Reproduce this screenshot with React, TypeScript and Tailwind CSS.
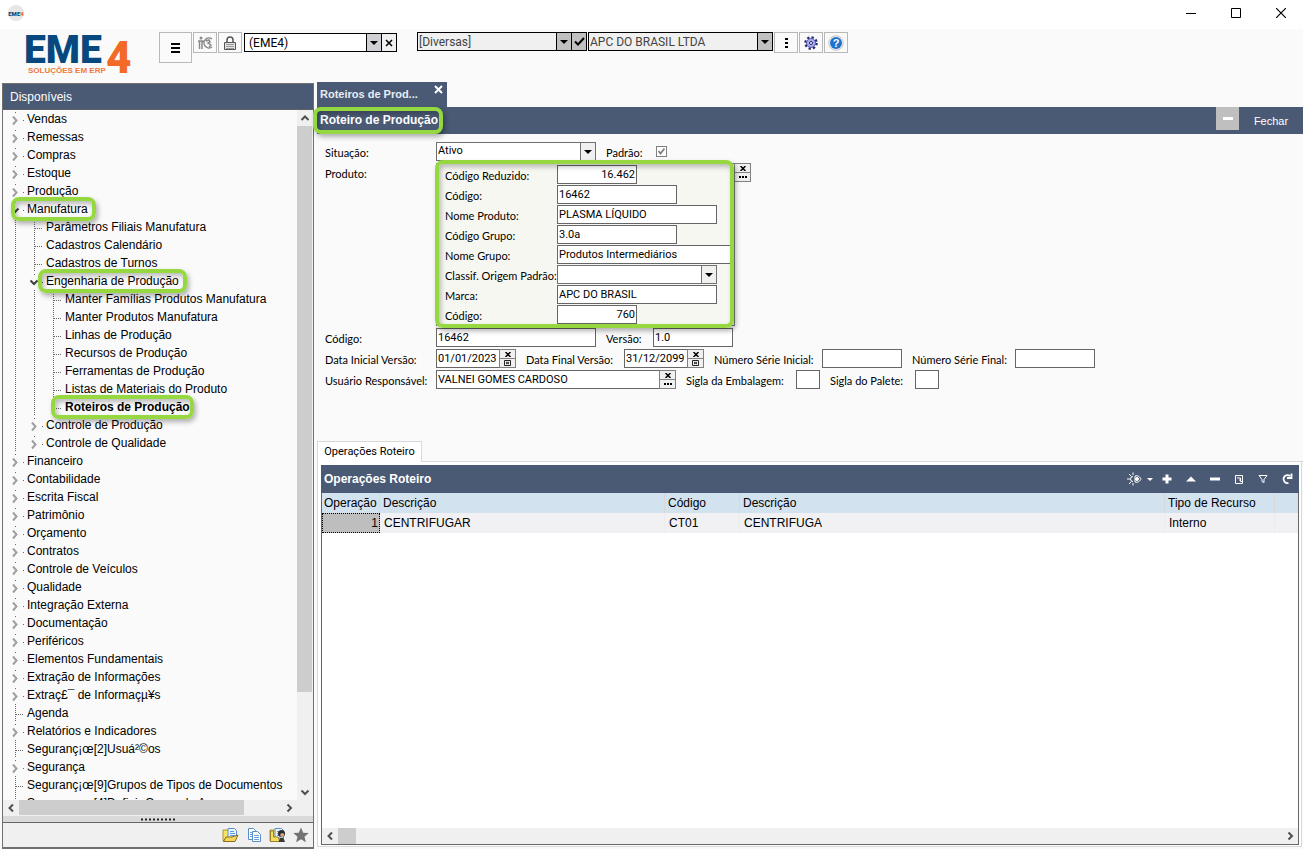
import React from "react";

type Node = { label: string; kids?: Node[]; leaf?: boolean; open?: boolean; bold?: boolean; mark?: string };

const leaf = (label: string): Node => ({ label, leaf: true });
const closed = (label: string): Node => ({ label });

const tree: Node[] = [
  closed("Vendas"),
  closed("Remessas"),
  closed("Compras"),
  closed("Estoque"),
  closed("Produção"),
  {
    label: "Manufatura",
    open: true,
    mark: "-left-4 -right-2",
    kids: [
      leaf("Parâmetros Filiais Manufatura"),
      leaf("Cadastros Calendário"),
      leaf("Cadastros de Turnos"),
      {
        label: "Engenharia de Produção",
        open: true,
        mark: "-left-2 -right-2",
        kids: [
          leaf("Manter Famílias Produtos Manufatura"),
          leaf("Manter Produtos Manufatura"),
          leaf("Linhas de Produção"),
          leaf("Recursos de Produção"),
          leaf("Ferramentas de Produção"),
          leaf("Listas de Materiais do Produto"),
          { label: "Roteiros de Produção", leaf: true, bold: true, mark: "-left-3.5 -right-1" },
        ],
      },
      closed("Controle de Produção"),
      closed("Controle de Qualidade"),
    ],
  },
  closed("Financeiro"),
  closed("Contabilidade"),
  closed("Escrita Fiscal"),
  closed("Patrimônio"),
  closed("Orçamento"),
  closed("Contratos"),
  closed("Controle de Veículos"),
  closed("Qualidade"),
  closed("Integração Externa"),
  closed("Documentação"),
  closed("Periféricos"),
  closed("Elementos Fundamentais"),
  closed("Extração de Informações"),
  closed("Extraç£¯ de Informaçµ¥s"),
  leaf("Agenda"),
  closed("Relatórios e Indicadores"),
  leaf("Seguranç¡œ[2]Usuá²©os"),
  closed("Segurança"),
  leaf("Seguranç¡œ[9]Grupos de Tipos de Documentos"),
  leaf("Seguranç¡œ[4]Definir Grupo de Acesso"),
];

const GREEN = "pointer-events-none absolute z-10 rounded-lg border-4 border-[#95d840] shadow-[2px_3px_5px_rgba(0,0,0,0.3),inset_2px_3px_5px_rgba(0,0,0,0.25)]";

function Guide() {
  return (
    <svg className="h-[18px] w-[19px] shrink-0" viewBox="0 0 19 18" shapeRendering="crispEdges">
      <path d="M7.5 0V18" stroke="#666" strokeDasharray="1 1" />
    </svg>
  );
}

function Knob({ node, last }: { node: Node; last: boolean }) {
  return (
    <svg className="h-[18px] w-[19px] shrink-0" viewBox="0 0 19 18">
      {node.leaf ? (
        <path d={last ? "M7.5 0V11M8 10.5H16" : "M7.5 0V18M8 10.5H16"} stroke="#666" strokeDasharray="1 1" fill="none" shapeRendering="crispEdges" />
      ) : (
        <>
          {node.open ? (
            <path d="M3.5 8.5L7 12L10.5 8.5" stroke="#404040" strokeWidth="2" fill="none" />
          ) : (
            <path d="M5 6.5L8.5 10.5L5 14.5" stroke="#a0a0a0" strokeWidth="2" fill="none" />
          )}
          <path d="M15 10.5H16M7 2.5H8" stroke="#666" shapeRendering="crispEdges" />
        </>
      )}
    </svg>
  );
}

function Branch({ nodes, depth }: { nodes: Node[]; depth: number }) {
  return (
    <ul>
      {nodes.map((n, i) => (
        <li key={n.label}>
          <div className="flex h-[18px] items-center whitespace-nowrap">
            {Array.from({ length: depth }, (_, g) => (
              <Guide key={g} />
            ))}
            <Knob node={n} last={depth > 0 && i === nodes.length - 1} />
            <a href="#" className={n.bold ? "relative font-bold leading-[18px]" : "relative leading-[18px]"}>
              {n.label}
              {n.mark && <span className={`${GREEN} -inset-y-[3px] ${n.mark}`} />}
            </a>
          </div>
          {n.kids && <Branch nodes={n.kids} depth={depth + 1} />}
        </li>
      ))}
    </ul>
  );
}

function Arrow({ dir }: { dir: "up" | "down" | "left" | "right" }) {
  const d = { up: "M4.5 10L8 6.5L11.5 10", down: "M4.5 6.5L8 10L11.5 6.5", left: "M10 4.5L6.5 8L10 11.5", right: "M6.5 4.5L10 8L6.5 11.5" }[dir];
  return (
    <button type="button" aria-label={dir} className="size-4 shrink-0">
      <svg viewBox="0 0 16 16" className="size-4">
        <path d={d} fill="none" stroke="#505050" strokeWidth="2" />
      </svg>
    </button>
  );
}

function Caret() {
  return (
    <svg viewBox="0 0 8 4" className="h-1 w-2">
      <path d="M0 0H8L4 4Z" fill="#000" />
    </svg>
  );
}

function Combo({ value, label, id, className, cell, textClass }: { value: string; label?: string; id?: string; className: string; cell: string; textClass: string }) {
  return (
    <div className={`relative flex h-[19px] border ${className}`}>
      <select id={id} aria-label={label} className={`w-full appearance-none bg-transparent px-px font-['Roboto',sans-serif] outline-none ${textClass}`}>
        <option>{value}</option>
      </select>
      <span className={`pointer-events-none absolute inset-y-0 right-0 flex w-[15px] items-center justify-center border-l ${cell}`}>
        <Caret />
      </span>
    </div>
  );
}

const ICON_BTN = "flex h-[21px] w-6 items-center justify-center border border-[#b8b8b8] bg-[#fafafa]";
const FIELD_TEXT = "text-[11px] text-black";
const LABEL = "shrink-0 whitespace-nowrap pt-0.5 leading-[17px]";
const INPUT = "h-[19px] border border-[#666] bg-white px-px font-['Roboto',sans-serif] text-[11px] text-black outline-none";

function Pair({ kind }: { kind: "dots" | "cal" }) {
  return (
    <span className="-ml-px flex h-[19px] w-[17px] shrink-0 flex-col border border-[#808080] bg-[#f0f0f0]">
      <button type="button" aria-label="Limpar" className="flex h-[9px] items-center justify-center border-b border-[#808080]">
        <svg viewBox="0 0 6 5" className="h-[5px] w-1.5">
          <path d="M0.5 0L5.5 5M5.5 0L0.5 5" stroke="#000" strokeWidth="1.5" />
        </svg>
      </button>
      <button type="button" aria-label="Escolher" className="flex h-2 items-center justify-center">
        {kind === "dots" ? (
          <svg viewBox="0 0 8 2" className="h-0.5 w-2">
            <path d="M0 1H2M3 1H5M6 1H8" stroke="#000" strokeWidth="2" />
          </svg>
        ) : (
          <svg viewBox="0 0 7 6" className="h-1.5 w-[7px]">
            <path d="M0.5 0.5H6.5V5.5H0.5ZM2 2L5 4M5 2L2 4" stroke="#222" fill="none" />
          </svg>
        )}
      </button>
    </span>
  );
}

function Field({ id, label, value, labelWidth, width, right }: { id: string; label: string; value: string; labelWidth: string; width: string; right?: boolean }) {
  return (
    <>
      <label htmlFor={id} className={`${LABEL} ${labelWidth}`}>{label}</label>
      <input id={id} defaultValue={value} className={`${INPUT} ${width} ${right ? "text-right" : ""}`} />
    </>
  );
}

function Logo() {
  return (
    <svg viewBox="0 0 112 48" className="h-12 w-28 overflow-visible" role="img" aria-label="EME4 Soluções em ERP">
      <text x="0" y="31" fontFamily="Roboto, sans-serif" fontWeight="900" fontSize="39" fill="#07497f">EME</text>
      <text x="82" y="41" fontFamily="Roboto, sans-serif" fontWeight="900" fontSize="44" fill="#f26a25">4</text>
      <text x="4" y="41" fontFamily="Liberation Sans, sans-serif" fontWeight="700" fontSize="8" fill="#ee7a3d">SOLUÇÕES EM ERP</text>
    </svg>
  );
}

function Folder({ person }: { person?: boolean }) {
  return (
    <svg viewBox="0 0 17 16" className="h-4 w-[17px]">
      <path d="M1 3H6L7 5V14H1Z" fill="#f7e36a" stroke="#b0922a" />
      <path d="M6 1.5H12.5L14.5 3.5V11H6Z" fill="#e9f3ff" stroke="#5b8fc9" />
      <path d="M8 4.5H12M8 6.5H13M8 8.5H13" stroke="#5b9be0" />
      {person ? (
        <>
          <path d="M1.5 14.5V4H4.500V10H9L11 14.5Z" fill="#f3dc5e" stroke="#8a6b17" strokeWidth="0.8" />
          <circle cx="12.500" cy="6.500" r="3.500" fill="#2b2b2b" />
          <circle cx="13.2" cy="8" r="2" fill="#d9a27c" />
          <path d="M9.500 15L11 11H14.500L16 15Z" fill="#3a3a3a" />
        </>
      ) : (
        <path d="M1.5 14.5L4 10H10L16 8L13 14.5Z" fill="#f5d75c" stroke="#8a6b17" />
      )}
    </svg>
  );
}

function Sidebar() {
  return (
    <aside className="ml-0.5 mt-px flex w-[312px] shrink-0 flex-col border-b-2 border-l border-r border-t border-[#707070] bg-[#fafafa] text-[12px] text-black">
      <h2 className="h-[26px] shrink-0 border-b border-[#606060] bg-[#4a5a74] pl-[7px] leading-[27px] text-white">Disponíveis</h2>
      <div className="flex min-h-0 flex-1">
        <nav className="min-w-0 flex-1 overflow-hidden pl-[5px]">
          <Branch nodes={tree} depth={0} />
        </nav>
        <div className="flex w-4 flex-col bg-[#f0f0f0]">
          <Arrow dir="up" />
          <div className="flex-1">
            <div className="h-[86%] w-[15px] bg-[#cdcdcd]" />
          </div>
          <Arrow dir="down" />
        </div>
      </div>
      <div className="flex h-4 shrink-0 bg-[#f0f0f0] pr-4">
        <Arrow dir="left" />
        <div className="flex-1">
          <div className="h-[15px] w-[86%] bg-[#cdcdcd]" />
        </div>
        <Arrow dir="right" />
      </div>
      <div className="flex h-[7px] shrink-0 items-center justify-center border-b border-[#666] bg-[#dadada]">
        <svg viewBox="0 0 35 3" className="h-[3px] w-[35px]">
          <path d="M0 1.5H35" stroke="#222" strokeWidth="2" strokeDasharray="2 2" />
        </svg>
      </div>
      <div className="flex h-6 shrink-0 items-center justify-end gap-[7px] bg-[#f0f0f0] pr-1">
        <button type="button" aria-label="Abrir"><Folder /></button>
        <button type="button" aria-label="Copiar">
          <svg viewBox="0 0 16 16" className="size-4">
            <path d="M2.5 1.5H7.5L9.5 3.5V12.5H2.5Z" fill="#fff" stroke="#5b8fc9" />
            <path d="M6.5 4.5H11.5L14.5 7.5V14.5H6.5Z" fill="#fff" stroke="#5b8fc9" />
            <path d="M8 8.5H13M8 10.5H13M8 12.5H13M4 5.5H6M4 7.5H6M4 9.5H6" stroke="#6aa3e0" />
          </svg>
        </button>
        <button type="button" aria-label="Usuário"><Folder person /></button>
        <button type="button" aria-label="Favoritos">
          <svg viewBox="0 0 16 16" className="size-4">
            <path d="M8 0.5L10.2 5.7L15.8 6.1L11.5 9.8L12.9 15.3L8 12.3L3.1 15.3L4.5 9.8L0.2 6.1L5.8 5.7Z" fill="#70736f" />
          </svg>
        </button>
      </div>
    </aside>
  );
}

function ProductForm() {
  return (
    <form className="flex shrink-0 flex-col gap-0.5 pb-[52px] pl-2 pt-2 font-['Lato',sans-serif] text-[11px]">
      <div className="flex">
        <label htmlFor="sit" className={`${LABEL} w-[111px]`}>Situação:</label>
        <Combo id="sit" value="Ativo" className="w-40 border-[#707070] bg-white" cell="border-[#707070] bg-[#f0f0f0]" textClass={FIELD_TEXT} />
        <label htmlFor="padrao" className={`${LABEL} ml-2.5 w-[50px]`}>Padrão:</label>
        <span className="relative flex items-center">
          <input id="padrao" type="checkbox" defaultChecked className="size-[11px] appearance-none border border-[#808080] bg-white" />
          <svg viewBox="0 0 11 11" className="pointer-events-none absolute size-[11px]">
            <path d="M2.5 5L4.5 7.5L8.5 2.5" fill="none" stroke="#808080" strokeWidth="1.8" />
          </svg>
        </span>
      </div>
      <div className="flex">
        <span className={`${LABEL} w-[111px]`}>Produto:</span>
        <fieldset className="relative flex h-[163px] w-[299px] flex-col gap-px border border-[#808080] bg-[#f7f7f2] pl-2 pt-px">
          <div className="flex"><Field id="cr" label="Código Reduzido:" value="16.462" labelWidth="w-28" width="w-20" right /></div>
          <div className="flex"><Field id="c1" label="Código:" value="16462" labelWidth="w-28" width="w-[120px]" /></div>
          <div className="flex"><Field id="np" label="Nome Produto:" value="PLASMA LÍQUIDO" labelWidth="w-28" width="w-40" /></div>
          <div className="flex"><Field id="cg" label="Código Grupo:" value="3.0a" labelWidth="w-28" width="w-[120px]" /></div>
          <div className="flex"><Field id="ng" label="Nome Grupo:" value="Produtos Intermediários" labelWidth="w-28" width="w-44" /></div>
          <div className="flex">
            <label htmlFor="co" className={`${LABEL} w-28`}>Classif. Origem Padrão:</label>
            <Combo id="co" value="" className="w-40 border-[#707070] bg-white" cell="border-[#707070] bg-[#f0f0f0]" textClass={FIELD_TEXT} />
          </div>
          <div className="flex"><Field id="ma" label="Marca:" value="APC DO BRASIL" labelWidth="w-28" width="w-40" /></div>
          <div className="flex"><Field id="c2" label="Código:" value="760" labelWidth="w-28" width="w-20" right /></div>
          <span className={`${GREEN} -bottom-[3px] -left-0.5 -top-1 right-0`} />
        </fieldset>
        <Pair kind="dots" />
      </div>
      <div className="flex">
        <Field id="cod" label="Código:" value="16462" labelWidth="w-[111px]" width="w-40" />
        <Field id="ver" label="Versão:" value="1.0" labelWidth="ml-2.5 w-[47px]" width="w-20" />
      </div>
      <div className="flex">
        <Field id="di" label="Data Inicial Versão:" value="01/01/2023" labelWidth="w-[111px]" width="w-16" />
        <Pair kind="cal" />
        <Field id="df" label="Data Final Versão:" value="31/12/2099" labelWidth="ml-2.5 w-[98px]" width="w-16" />
        <Pair kind="cal" />
        <Field id="si" label="Número Série Inicial:" value="" labelWidth="ml-2.5 w-[108px]" width="w-20" />
        <Field id="sf" label="Número Série Final:" value="" labelWidth="ml-2.5 w-[103px]" width="w-20" />
      </div>
      <div className="flex">
        <Field id="ur" label="Usuário Responsável:" value="VALNEI GOMES CARDOSO" labelWidth="w-[111px]" width="w-56" />
        <Pair kind="dots" />
        <Field id="se" label="Sigla da Embalagem:" value="" labelWidth="ml-2.5 w-[110px]" width="w-6" />
        <Field id="sp" label="Sigla do Palete:" value="" labelWidth="ml-2.5 w-[85px]" width="w-6" />
      </div>
    </form>
  );
}

const tools: [string, React.ReactNode][] = [
  ["Incluir", <path d="M8 3.5V12.5M3.5 8H12.5" strokeWidth="3" />],
  ["Subir", <path d="M3 10.5L8 5.5L13 10.5Z" fill="#fff" stroke="none" />],
  ["Remover", <path d="M3 8H13" strokeWidth="3" />],
  ["Expandir", <path d="M4.5 4.5H11.5V12.5H4.5ZM6 7H9.500V10.500H11.500M8 9H9.500" />],
  ["Filtrar", <path d="M4 4.5H12L9 8.5V11.5L7 10.5V8.5Z" />],
  ["Atualizar", <path d="M11 5A4 4 0 1 0 9.500 12M12.500 2.500V7H8" strokeWidth="1.800" />],
];

function Operations() {
  const th = "border-r border-[#d8d8d8] px-[3px] text-left font-normal whitespace-nowrap";
  const td = "border-r border-[#ececee] px-1 whitespace-nowrap";
  return (
    <section className="flex min-h-0 flex-1 flex-col">
      <div className="flex shrink-0">
        <button type="button" className="h-[21px] w-[105px] border border-b-0 border-[#d8d8d8] bg-white font-['Roboto',sans-serif] text-[11px] leading-[18px]">Operações Roteiro</button>
        <span className="flex-1 border-b border-[#d8d8d8]" />
      </div>
      <div className="mb-0.5 mr-px flex min-h-0 flex-1 flex-col border border-t-0 border-[#d8d8d8] bg-white px-[3px] pb-px pt-[3px] text-[12px]">
        <div className="-mr-px flex h-7 shrink-0 items-center bg-[#4a5a74] pl-[3px] text-white">
          <h2 className="flex-1 font-bold">Operações Roteiro</h2>
          <button type="button" aria-label="Opções" className="flex w-7 items-center gap-1">
            <svg viewBox="0 0 16 14" className="h-3.5 w-4" fill="none" stroke="#fff">
              <path d="M0 7H3M2 2L4.5 4.5M2 12L4.5 9.500M6 0.500V3M6 11V13.500" />
              <path d="M6 4.500A2.500 2.500 0 0 0 6 9.500" />
              <path d="M8 4C11 3 13 5 14 7C13 9 11 11 8 10Z" />
              <circle cx="10" cy="7" r="1.500" fill="#fff" />
            </svg>
            <svg viewBox="0 0 6 3" className="h-[3px] w-1.5"><path d="M0 0H6L3 3Z" fill="#fff" /></svg>
          </button>
          {tools.map(([name, icon]) => (
            <button key={name} type="button" aria-label={name} className="flex w-6 justify-center">
              <svg viewBox="0 0 16 16" className="size-4" fill="none" stroke="#fff">{icon}</svg>
            </button>
          ))}
        </div>
        <div className="-mr-px flex min-h-0 flex-1 flex-col border border-t-0 border-[#666]">
          <div className="min-h-0 flex-1 overflow-hidden">
            <table className="w-full table-fixed border-separate border-spacing-0">
              <colgroup>
                <col className="w-[58px]" />
                <col className="w-[285px]" />
                <col className="w-[75px]" />
                <col className="w-[425px]" />
                <col className="w-[110px]" />
                <col />
              </colgroup>
              <thead>
                <tr className="h-5 bg-[#d3e2ef]">
                  <th className="border-r border-[#d8d8d8] pl-0.5 text-left font-normal">Operação</th>
                  <th className={th}>Descrição</th>
                  <th className={th}>Código</th>
                  <th className={th}>Descrição</th>
                  <th className={th}>Tipo de Recurso</th>
                  <th aria-label="Vazio" />
                </tr>
              </thead>
              <tbody>
                <tr className="h-5 bg-[#f1f1f3]">
                  <td className="border border-dotted border-black bg-[#bebebe] px-px text-right">1</td>
                  <td className={td}>CENTRIFUGAR</td>
                  <td className={td}>CT01</td>
                  <td className={td}>CENTRIFUGA</td>
                  <td className={td}>Interno</td>
                  <td />
                </tr>
              </tbody>
            </table>
          </div>
          <div className="flex h-4 shrink-0 bg-[#f0f0f0]">
            <Arrow dir="left" />
            <div className="flex-1"><div className="h-full w-[18px] bg-[#cdcdcd]" /></div>
            <Arrow dir="right" />
          </div>
        </div>
      </div>
    </section>
  );
}

export default function App() {
  const winBtn = "flex w-[45px] items-center justify-center";
  return (
    <div className="flex h-screen min-h-[600px] flex-col overflow-hidden bg-[#fafafa] font-['Liberation_Sans',sans-serif] text-black">
      <div className="flex h-[29px] shrink-0 bg-white pl-2">
        <span className="mt-[5px] flex size-4 items-center justify-center rounded-full bg-[#e6e6e6] font-['Roboto',sans-serif] text-[6px] font-black text-[#07497f]">
          EME<span className="text-[#f26a25]">4</span>
        </span>
        <div className="ml-auto flex h-[26px]">
          <button type="button" aria-label="Minimizar" className={winBtn}><svg viewBox="0 0 10 10" className="size-2.5"><path d="M0 5.500H10" stroke="#000" /></svg></button>
          <button type="button" aria-label="Maximizar" className={winBtn}><svg viewBox="0 0 10 10" className="size-2.5"><path d="M0.500 0.500H9.500V9.500H0.500Z" fill="none" stroke="#000" /></svg></button>
          <button type="button" aria-label="Fechar janela" className={winBtn}><svg viewBox="0 0 10 10" className="size-2.5"><path d="M0 0L10 10M10 0L0 10" stroke="#000" strokeWidth="1.200" /></svg></button>
        </div>
      </div>

      <header className="flex h-[53px] shrink-0 items-start pt-[3px] text-[12px]">
        <div className="ml-6 w-[135px]"><Logo /></div>
        <button type="button" aria-label="Menu" className="flex h-[31px] w-[33px] items-center justify-center border border-[#b8b8b8] bg-[#fafafa]">
          <svg viewBox="0 0 9 10" className="h-2.5 w-[9px]"><path d="M0 1H9M0 5H9M0 9H9" stroke="#000" strokeWidth="2" /></svg>
        </button>
        <button type="button" aria-label="Informações" className={`${ICON_BTN} ml-px`}>
          <svg viewBox="0 0 17 14" className="h-3.5 w-[17px]" fill="none" stroke="#8a8a8a" strokeWidth="1.500">
            <circle cx="4" cy="2" r="1.500" fill="#8a8a8a" stroke="none" />
            <path d="M1 5H5V13M2.500 13V5M5 6L7 5" />
            <path d="M15 3A5 5 0 1 0 15 11M9 5L12 4L13 6L11 7L14 9L12 11" />
          </svg>
        </button>
        <button type="button" aria-label="Bloquear" className={`${ICON_BTN} ml-px`}>
          <svg viewBox="0 0 12 14" className="h-3.5 w-3" fill="none" stroke="#555">
            <path d="M3 6V4A3 3 0 0 1 9 4V6" strokeWidth="1.500" />
            <path d="M0.500 6.500H11.500V13.500H0.500Z" fill="#e4e4e4" />
            <path d="M2 8.500H10M2 10.500H10M2 12.500H10" stroke="#999" />
          </svg>
        </button>
        <div className="ml-0.5 mt-px flex">
          <Combo label="Sistema" value="(EME4)" className="w-[138px] border-black bg-white" cell="border-black bg-[#cfcfd4]" textClass="pl-1 text-[12px]" />
          <button type="button" aria-label="Limpar" className="-ml-px flex h-[19px] w-4 items-center justify-center border border-black bg-[#f0f0f0]">
            <svg viewBox="0 0 8 8" className="size-2"><path d="M1 1L7 7M7 1L1 7" stroke="#000" strokeWidth="1.500" /></svg>
          </button>
        </div>
        <div className="ml-5 flex">
          <Combo label="Filial" value="[Diversas]" className="w-[155px] border-black bg-[#f0f0f0]" cell="border-black bg-[#c0c0c0]" textClass="text-[12px] text-[#444]" />
          <button type="button" aria-label="Confirmar" className="-ml-px flex h-[19px] w-4 items-center justify-center border border-black bg-[#c0c0c0]">
            <svg viewBox="0 0 11 9" className="h-[9px] w-[11px]"><path d="M1 4.500L4 7.500L10 1" fill="none" stroke="#000" strokeWidth="2" /></svg>
          </button>
          <Combo label="Empresa" value="APC DO BRASIL LTDA" className="ml-px w-[185px] border-black bg-[#f0f0f0]" cell="border-black bg-[#c0c0c0]" textClass="text-[12px] text-[#444]" />
        </div>
        <button type="button" aria-label="Mais" className={`${ICON_BTN} ml-px`}>
          <svg viewBox="0 0 3 10" className="h-2.5 w-[3px]"><path d="M0 1H3M0 5H3M0 9H3" stroke="#000" strokeWidth="2" /></svg>
        </button>
        <button type="button" aria-label="Configurações" className={`${ICON_BTN} ml-px`}>
          <svg viewBox="0 0 14 14" className="size-3.5">
            <circle cx="7" cy="7" r="5.500" fill="none" stroke="#25256b" strokeWidth="2.500" strokeDasharray="2.200 2.100" />
            <circle cx="7" cy="7" r="4.500" fill="#a9a9ee" stroke="#5a5ab0" />
            <circle cx="7" cy="7" r="1.500" fill="#fff" stroke="#25256b" />
          </svg>
        </button>
        <button type="button" aria-label="Ajuda" className={`${ICON_BTN} ml-px`}>
          <svg viewBox="0 0 16 16" className="size-4">
            <circle cx="8" cy="8" r="7.300" fill="#eee" stroke="#c8c8c8" />
            <circle cx="8" cy="8" r="6" fill="#1c74cf" />
            <text x="8" y="12" textAnchor="middle" fontFamily="Liberation Sans, sans-serif" fontWeight="700" fontSize="11" fill="#fff">?</text>
          </svg>
        </button>
      </header>

      <div className="flex min-h-0 flex-1">
        <Sidebar />
        <main className="ml-[3px] flex min-w-0 flex-1 flex-col">
          <div className="flex h-[25px] w-[130px] shrink-0 justify-between bg-[#4a5a74] pl-[3px] pr-1 text-[11px] font-bold leading-[25px] text-[#e8edf5]">
            <span>Roteiros de Prod...</span>
            <button type="button" aria-label="Fechar aba" className="mt-0.5 h-2.5">
              <svg viewBox="0 0 9 9" className="size-[9px]"><path d="M1 1L8 8M8 1L1 8" stroke="#fff" strokeWidth="2" /></svg>
            </button>
          </div>
          <div className="flex h-[27px] shrink-0 bg-[#4a5a74] pl-[3px] text-[12px] leading-[27px] text-white">
            <h1 className="relative font-bold">
              Roteiro de Produção
              <span className={`${GREEN} -left-[7px] -right-[5px] inset-y-0`} />
            </h1>
            <button type="button" aria-label="Minimizar painel" className="ml-auto flex h-[23px] w-[23px] items-center justify-center bg-[#bfbfbf]">
              <svg viewBox="0 0 10 3" className="h-[3px] w-2.5"><path d="M0 1.500H10" stroke="#fff" strokeWidth="3" /></svg>
            </button>
            <button type="button" className="w-16 text-[11px] leading-[24px]">Fechar</button>
          </div>
          <ProductForm />
          <Operations />
        </main>
      </div>
    </div>
  );
}
